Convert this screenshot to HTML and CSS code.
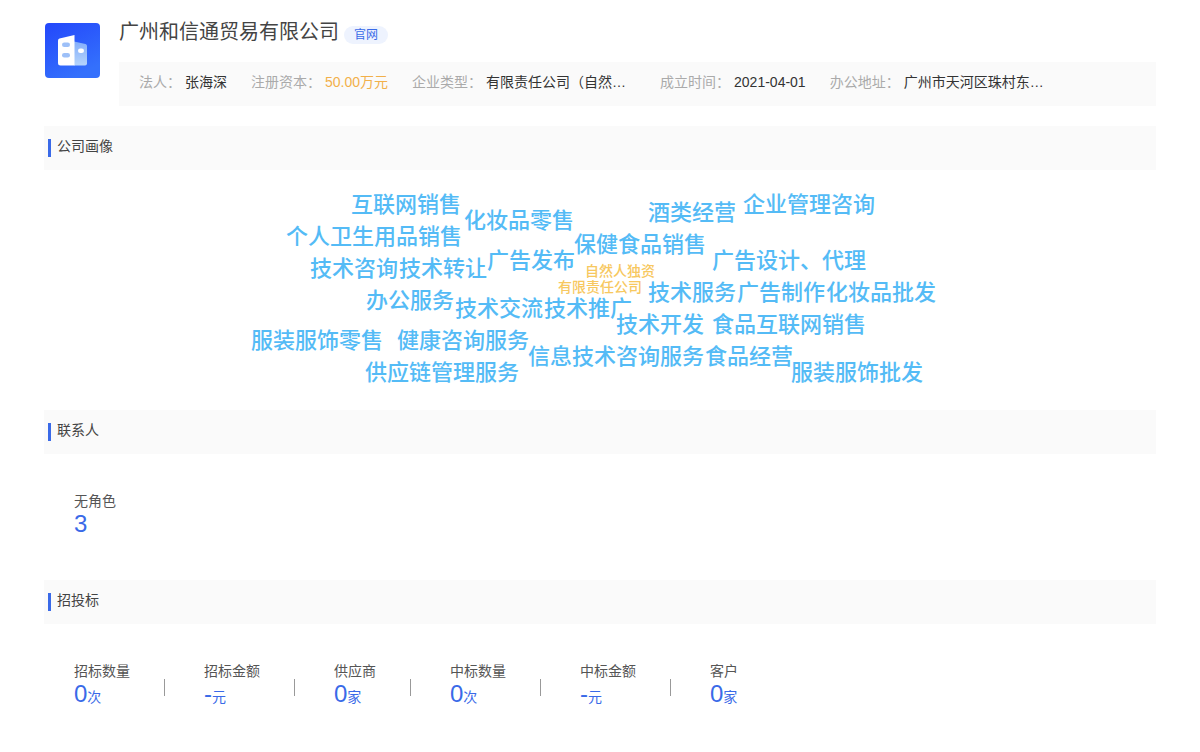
FILE: index.html
```html
<!DOCTYPE html>
<html lang="zh-CN">
<head>
<meta charset="utf-8">
<title>广州和信通贸易有限公司</title>
<link rel="stylesheet" href="styles.css">
</head>
<body>
<main class="page">
  <header class="company">
    <svg class="logo" viewBox="0 0 55 55" aria-hidden="true">
      <defs>
        <linearGradient id="logo-bg" x1="0" y1="0" x2="0.5" y2="1">
          <stop offset="0" stop-color="#2347fb"/>
          <stop offset="1" stop-color="#3470fc"/>
        </linearGradient>
        <linearGradient id="logo-side" x1="0" y1="0" x2="0" y2="1">
          <stop offset="0" stop-color="#84aefa"/>
          <stop offset="1" stop-color="#b4d4fc"/>
        </linearGradient>
      </defs>
      <rect width="55" height="55" rx="4" fill="url(#logo-bg)"/>
      <path d="M29 18.500 40.500 21Q42 21.400 42 23V40.500Q42 42.500 40 42.500H29Z" fill="url(#logo-side)"/>
      <path d="M14.500 15.400 29.500 12V42.500H15.500Q13 42.500 13 40V17.300Q13 15.800 14.500 15.400Z" fill="#fff"/>
      <rect x="17" y="19.500" width="8" height="4.500" rx="2.250" fill="#9dc0f8"/>
      <rect x="17" y="30" width="8" height="4.500" rx="2.250" fill="#9dc0f8"/>
      <rect x="33" y="25.500" width="6" height="4.500" rx="2.250" fill="#fff"/>
    </svg>
    <div class="company-main">
      <div class="title-row">
        <h1 class="name">广州和信通贸易有限公司</h1>
        <a class="site" href="#">官网</a>
      </div>
      <dl class="facts">
        <div class="fact"><dt>法人：</dt><dd>张海深</dd></div>
        <div class="fact"><dt>注册资本：</dt><dd class="money">50.00万元</dd></div>
        <div class="fact"><dt>企业类型：</dt><dd class="wide">有限责任公司（自然…</dd></div>
        <div class="fact"><dt>成立时间：</dt><dd>2021-04-01</dd></div>
        <div class="fact"><dt>办公地址：</dt><dd class="wide">广州市天河区珠村东…</dd></div>
      </dl>
    </div>
  </header>

  <section>
    <h2 class="bar">公司画像</h2>
    <div class="portrait">
      <svg class="cloud" width="700" height="208">
        <g class="word">
          <text x="101" y="26">互联网销售</text>
          <text x="214" y="42">化妆品零售</text>
          <text x="398" y="34">酒类经营</text>
          <text x="493" y="26">企业管理咨询</text>
          <text x="36" y="58">个人卫生用品销售</text>
          <text x="324" y="66">保健食品销售</text>
          <text x="237" y="82">广告发布</text>
          <text x="462" y="82">广告设计、代理</text>
          <text x="60" y="90">技术咨询</text>
          <text x="149" y="90">技术转让</text>
          <text x="398" y="114">技术服务</text>
          <text x="487" y="114">广告制作</text>
          <text x="576" y="114">化妆品批发</text>
          <text x="116" y="122">办公服务</text>
          <text x="205" y="130">技术交流</text>
          <text x="294" y="130">技术推广</text>
          <text x="366" y="146">技术开发</text>
          <text x="462" y="146">食品互联网销售</text>
          <text x="1" y="162">服装服饰零售</text>
          <text x="147" y="162">健康咨询服务</text>
          <text x="278" y="178">信息技术咨询服务</text>
          <text x="455" y="178">食品经营</text>
          <text x="115" y="194">供应链管理服务</text>
          <text x="541" y="194">服装服饰批发</text>
        </g>
        <g class="kind">
          <text x="335" y="90">自然人独资</text>
          <text x="308" y="106">有限责任公司</text>
        </g>
      </svg>
    </div>
  </section>

  <section>
    <h2 class="bar">联系人</h2>
    <dl class="stats">
      <div class="stat"><dt>无角色</dt><dd>3</dd></div>
    </dl>
  </section>

  <section>
    <h2 class="bar">招投标</h2>
    <dl class="stats">
      <div class="stat"><dt>招标数量</dt><dd>0<small>次</small></dd></div>
      <div class="stat"><dt>招标金额</dt><dd>-<small>元</small></dd></div>
      <div class="stat"><dt>供应商</dt><dd>0<small>家</small></dd></div>
      <div class="stat"><dt>中标数量</dt><dd>0<small>次</small></dd></div>
      <div class="stat"><dt>中标金额</dt><dd>-<small>元</small></dd></div>
      <div class="stat"><dt>客户</dt><dd>0<small>家</small></dd></div>
    </dl>
  </section>
</main>
</body>
</html>
```
FILE: styles.css
```css
* {
  box-sizing: border-box;
}

body,
h1,
h2,
dl,
dd {
  margin: 0;
}

body {
  background: #fff;
  color: #444;
  font: 14px/20px "Liberation Sans", "Noto Sans CJK SC", sans-serif;
}

h1,
h2 {
  font-weight: 400;
}

.page {
  padding: 16px 44px 0;
}

.company {
  display: flex;
  align-items: flex-start;
  gap: 19px;
  padding-left: 1px;
  margin-bottom: 20px;
}

.logo {
  flex: none;
  width: 55px;
  margin-top: 7px;
}

.company-main {
  flex: 1;
  min-width: 0;
}

.title-row {
  display: flex;
  align-items: flex-end;
  gap: 5px;
  height: 28px;
  margin-bottom: 18px;
}

.name {
  font-size: 20px;
  line-height: 24px;
  color: #444;
}

.site {
  padding: 0 10px;
  border-radius: 9px;
  background: #eef3fe;
  color: #3a6be8;
  font-size: 12px;
  line-height: 18px;
  text-decoration: none;
}

.facts {
  display: flex;
  gap: 24px;
  height: 44px;
  padding: 10px 20px;
  background: #fafafa;
  white-space: nowrap;
}

.fact {
  display: flex;
  gap: 4px;
}

.fact dt {
  color: #aaa;
}

.fact dd {
  color: #333;
}

.fact .money {
  color: #f2b04a;
}

.fact .wide {
  min-width: 150px;
}

.bar {
  display: flex;
  align-items: center;
  gap: 6px;
  height: 44px;
  padding: 0 4px 4px;
  background: #fafafa;
  font-size: 14px;
  color: #444;
}

.bar::before {
  content: "";
  width: 3px;
  height: 18px;
  margin-top: 4px;
  background: #3a6ae8;
}

.portrait {
  display: flex;
  justify-content: center;
  padding: 16px 0;
}

.cloud {
  flex: none;
}

.word {
  font-size: 22px;
  font-weight: 500;
  fill: #54bbf6;
}

.kind {
  font-size: 14px;
  font-weight: 500;
  fill: #f7c860;
}

.stats {
  display: flex;
  gap: 39px;
  padding: 37px 30px 43px;
}

.stat {
  display: grid;
  column-gap: 34px;
}

.stat:not(:last-child)::after {
  content: "";
  grid-area: 1 / 2 / 3 / 3;
  width: 1px;
  height: 17px;
  margin-top: 18px;
  background: #999;
}

.stat dt {
  grid-area: 1 / 1;
  color: #555;
}

.stat dd {
  grid-area: 2 / 1;
  color: #3a6ae8;
  font-size: 24px;
  line-height: 26px;
}

.stat small {
  font-size: 14px;
}
```
